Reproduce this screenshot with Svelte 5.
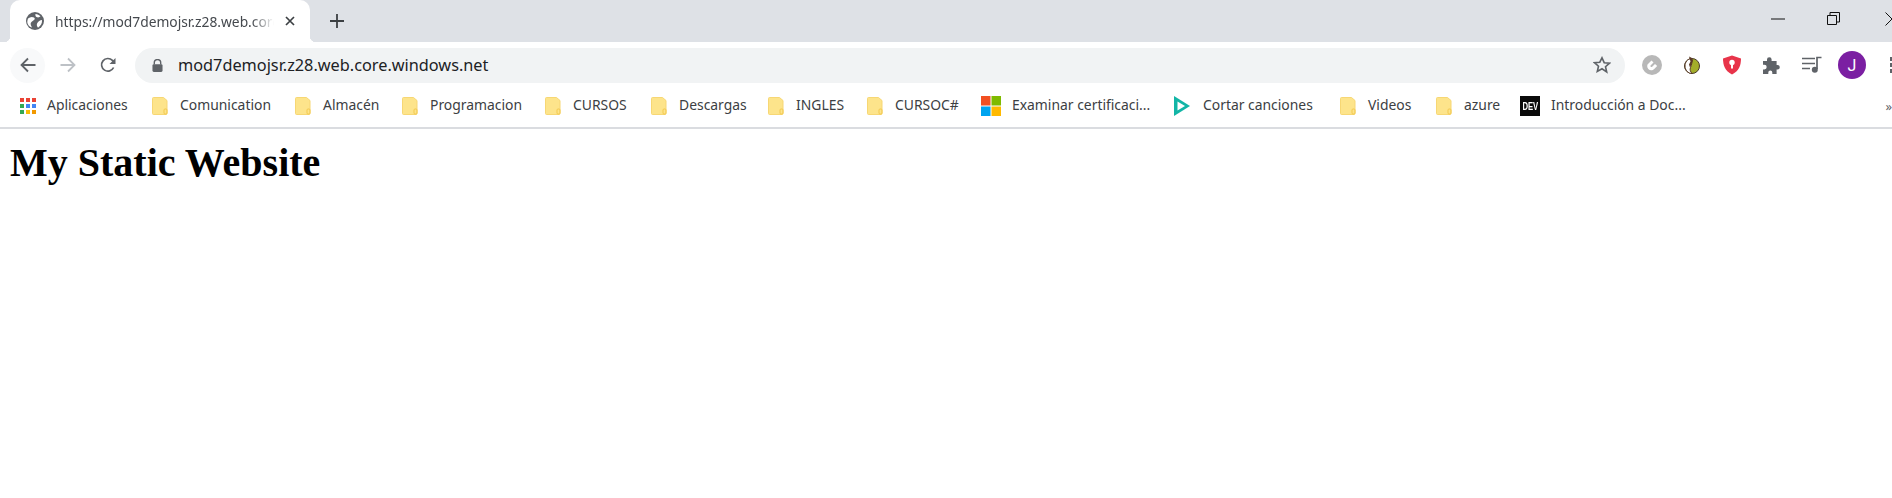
<script>
    const bookmarks = [
        { label: "Aplicaciones", icon: "apps", width: 132 },
        { label: "Comunication", icon: "folder", width: 143 },
        { label: "Almacén", icon: "folder", width: 107 },
        { label: "Programacion", icon: "folder", width: 143 },
        { label: "CURSOS", icon: "folder", width: 106 },
        { label: "Descargas", icon: "folder", width: 117 },
        { label: "INGLES", icon: "folder", width: 99 },
        { label: "CURSOC#", icon: "folder", width: 114 },
        { label: "Examinar certificaci...", icon: "ms", width: 192 },
        { label: "Cortar canciones", icon: "play", width: 167 },
        { label: "Videos", icon: "folder", width: 96 },
        { label: "azure", icon: "folder", width: 84 },
        { label: "Introducción a Doc...", icon: "dev", width: 190 },
    ];
</script>

<div class="browser">
    <div class="tabstrip">
        <div class="tab">
            <svg viewBox="0 0 18 18" width="18" height="18">
                <circle cx="9" cy="9" r="9" fill="#5f6368" />
                <path d="M2 6.500C4 5 6 4.500 8 5.500c1.500.9.5 2.500-1 3.300C5 10 4 11.500 5 13.500l1 2c-2-.5-3.500-1.500-4.200-3.500C1 10.500 1.300 8.500 2 6.500zM9.500 2c2 .2 3.700 1 5 2.300-1 1.200-2.700 1.500-4 .7-1-.6-1.300-1.900-1-3zM16 8c.3 3-1 5.800-4 7.700-1.200-1.400-1.500-3-.8-4.400.9-1.800 2.800-3.300 4.800-3.300z" fill="#fff" />
            </svg>
            <span class="tab-title">https://mod7demojsr.z28.web.core.windows.net</span>
            <svg viewBox="0 0 10 10" width="10" height="10">
                <path d="M1 1l8 8M9 1l-8 8" stroke="#3c4043" stroke-width="1.700" />
            </svg>
        </div>
        <svg class="new-tab" viewBox="0 0 14 14" width="14" height="14">
            <path d="M7 0v14M0 7h14" stroke="#3c4043" stroke-width="1.800" />
        </svg>
        <div class="window-controls">
            <svg class="win-min" viewBox="0 0 14 2" width="14" height="2">
                <path d="M0 1h14" stroke="#111" stroke-width="1" />
            </svg>
            <svg viewBox="0 0 13 13" width="13" height="13">
                <path d="M.5 3.500h9v9h-9zM3 3.500v-3h9.500v9.500h-3" fill="none" stroke="#111" stroke-width="1" />
            </svg>
            <svg class="win-close" viewBox="0 0 14 14" width="14" height="14">
                <path d="M.5.500l13 13M13.500.500l-13 13" stroke="#111" stroke-width="1" />
            </svg>
        </div>
    </div>

    <div class="toolbar">
        <div class="nav-button hovered">
            <svg viewBox="0 0 16 16" width="16" height="16">
                <path d="M15.500 8H2M8 1.500L1.500 8 8 14.500" fill="none" stroke="#5f6368" stroke-width="1.800" />
            </svg>
        </div>
        <div class="nav-button">
            <svg viewBox="0 0 16 16" width="16" height="16">
                <path d="M.5 8H14M8 1.500L14.500 8 8 14.500" fill="none" stroke="#bdc1c6" stroke-width="1.800" />
            </svg>
        </div>
        <div class="nav-button reload">
            <svg viewBox="0 0 16 16" width="16" height="16">
                <path d="M13.600 10.500A6.300 6.300 0 1 1 12.400 3.400L14.500 5.500" fill="none" stroke="#5f6368" stroke-width="1.700" />
                <path d="M15.500.9v6h-6z" fill="#5f6368" />
            </svg>
        </div>
        <div class="omnibox">
            <svg viewBox="0 0 12 14" width="11" height="13">
                <path d="M2.500 6V4a3.500 3.500 0 0 1 7 0v2" fill="none" stroke="#5f6368" stroke-width="1.500" />
                <rect x="0.500" y="5.500" width="11" height="8.500" rx="1.500" fill="#5f6368" />
            </svg>
            <span class="url">mod7demojsr.z28.web.core.windows.net</span>
            <svg viewBox="0 0 18 18" width="18" height="18">
                <path d="M9 1.800l2.200 4.900 5.300.5-4 3.500 1.200 5.300L9 12.800l-4.700 2.700 1.200-5.300-4-3.500 5.300-.5z" fill="none" stroke="#5f6368" stroke-width="1.600" />
            </svg>
        </div>
        <div class="extensions">
            <div class="ext">
                <svg viewBox="0 0 20 20" width="20" height="20">
                    <circle cx="10" cy="10" r="10" fill="#b8b8b8" />
                    <path d="M5.500 9.500l-.3 1.500a4 4 0 0 0 4 4.200c1.200 0 2.200-.5 3-1.300l3-3-2.200-2-2.800 2.800c-.8.800-2.200 0-1.700-1.200l3-3-2-2z" fill="#fff" />
                </svg>
            </div>
            <div class="ext">
                <svg viewBox="0 0 18 18" width="18" height="18">
                    <circle cx="9" cy="10" r="7.500" fill="#a3ad2a" stroke="#4a3a2a" stroke-width="1" />
                    <path d="M8.500 2.500C4.500 3 2 6 2 10s3 7.500 7 7.500c-1.500-2-2.500-3.500-1.500-6s2-5.500 1-9z" fill="#fff" stroke="#5a3a26" stroke-width="1" />
                    <path d="M6 .5l3 1.500 1 2.500-1.500 4-1.500 3-1-3 1.500-3z" fill="#5a3a26" />
                </svg>
            </div>
            <div class="ext">
                <svg viewBox="0 0 20 20" width="20" height="20">
                    <path d="M10 .5L19 3.500c0 7-2 12.500-9 16C3 16 1 10.500 1 3.500z" fill="#e8344a" />
                    <circle cx="10" cy="7.500" r="2.700" fill="#fff" />
                    <path d="M9 8.500h2v5H9z" fill="#fff" />
                </svg>
            </div>
            <div class="ext">
                <svg viewBox="0 0 18 18" width="18" height="18">
                    <path d="M0 5h4V3.500a2.300 2.300 0 0 1 4.600 0V5h5v4h.9a2.300 2.300 0 0 1 0 4.600H13.600V18H9.300v-1.500a2 2 0 0 0-4 0V18H0v-4.500h1.300a2.400 2.400 0 0 0 0-4.800H0z" fill="#5f6368" />
                </svg>
            </div>
            <div class="ext">
                <svg viewBox="0 0 20 18" width="20" height="18">
                    <path d="M0 2.500h13M0 7.500h13M0 12.500h8" stroke="#5f6368" stroke-width="1.700" />
                    <path d="M15 13V1.500h4.500" fill="none" stroke="#5f6368" stroke-width="1.700" />
                    <circle cx="12.800" cy="13.800" r="3" fill="#5f6368" />
                </svg>
            </div>
            <div class="ext">
                <div class="avatar">J</div>
            </div>
            <div class="ext">
                <svg viewBox="0 0 4 16" width="4" height="16">
                    <rect x="0" y="0" width="4" height="4" fill="#5f6368" />
                    <rect x="0" y="6" width="4" height="4" fill="#5f6368" />
                    <rect x="0" y="12" width="4" height="4" fill="#5f6368" />
                </svg>
            </div>
        </div>
    </div>

    <div class="bookmarks">
        {#each bookmarks as b}
            <div class="bookmark" style="width: {b.width}px">
                {#if b.icon === "folder"}
                    <svg class="folder" viewBox="0 0 16 18" width="16" height="18">
                        <path d="M1.500.500h10l3.500 3v13a1 1 0 0 1-1 1H1.500a1 1 0 0 1-1-1v-15a1 1 0 0 1 1-1z" fill="#fde48b" stroke="#f7d774" />
                        <rect x="12" y="12" width="3" height="5" rx="1" fill="none" stroke="#f3c94f" />
                    </svg>
                {:else if b.icon === "apps"}
                    <svg viewBox="0 0 16 16" width="16" height="16">
                        <rect x="0" y="0" width="4" height="4" fill="#ea4335" />
                        <rect x="6" y="0" width="4" height="4" fill="#ea4335" />
                        <rect x="12" y="0" width="4" height="4" fill="#ea4335" />
                        <rect x="0" y="6" width="4" height="4" fill="#34a853" />
                        <rect x="6" y="6" width="4" height="4" fill="#4285f4" />
                        <rect x="12" y="6" width="4" height="4" fill="#4285f4" />
                        <rect x="0" y="12" width="4" height="4" fill="#34a853" />
                        <rect x="6" y="12" width="4" height="4" fill="#fbbc04" />
                        <rect x="12" y="12" width="4" height="4" fill="#f29900" />
                    </svg>
                {:else if b.icon === "ms"}
                    <svg viewBox="0 0 20 20" width="20" height="20">
                        <rect x="0" y="0" width="9.500" height="9.500" fill="#f25022" />
                        <rect x="10.500" y="0" width="9.500" height="9.500" fill="#7fba00" />
                        <rect x="0" y="10.500" width="9.500" height="9.500" fill="#00a4ef" />
                        <rect x="10.500" y="10.500" width="9.500" height="9.500" fill="#ffb900" />
                    </svg>
                {:else if b.icon === "play"}
                    <svg class="folder" viewBox="0 0 18 20" width="18" height="20">
                        <path d="M1 0l16 10L1 20z" fill="#12b5a6" />
                        <path d="M4.500 5.500l7.500 4.500-7.500 4.500z" fill="#fff" />
                    </svg>
                {:else if b.icon === "dev"}
                    <div class="dev-icon"><span>DEV</span></div>
                {/if}
                <span class="bookmark-label">{b.label}</span>
            </div>
        {/each}
        <span class="more">»</span>
    </div>
</div>

<h1>My Static Website</h1>

<style>
    :global(body) {
        background: #ffffff;
        overflow: hidden;
    }

    .browser {
        font-family: "Noto Sans", "Open Sans", sans-serif;
        color: #3c4043;
    }

    .tabstrip {
        display: flex;
        align-items: flex-end;
        height: 42px;
        background: #dee1e6;
        padding-left: 10px;
    }

    .tab {
        display: flex;
        align-items: center;
        position: relative;
        width: 300px;
        height: 42px;
        padding: 0 15px 0 16px;
        box-sizing: border-box;
        background: #ffffff;
        border-radius: 10px 10px 0 0;
        gap: 11px;
    }

    /* flared foot of the active tab */
    .tab::before,
    .tab::after {
        content: "";
        position: absolute;
        bottom: 0;
        width: 6px;
        height: 6px;
    }

    .tab::before {
        left: -6px;
        background: radial-gradient(circle at 0 0, transparent 6px, #ffffff 6.500px);
    }

    .tab::after {
        right: -6px;
        background: radial-gradient(circle at 100% 0, transparent 6px, #ffffff 6.500px);
    }

    .tab-title {
        flex: 1;
        overflow: hidden;
        white-space: nowrap;
        font-size: 13.800px;
        color: #45494e;
        -webkit-mask-image: linear-gradient(to right, #000 90%, transparent);
        mask-image: linear-gradient(to right, #000 90%, transparent);
    }

    .new-tab {
        margin: 0 0 14px 20px;
    }

    .window-controls {
        display: flex;
        align-items: center;
        align-self: flex-start;
        gap: 45px;
        margin-left: auto;
        height: 37px;
    }

    .win-min {
        margin-right: -3px;
    }

    .win-close {
        margin-right: -7px;
    }

    .toolbar {
        display: flex;
        align-items: center;
        height: 46px;
        padding-left: 10px;
        background: #ffffff;
    }

    .nav-button {
        display: flex;
        flex-shrink: 0;
        align-items: center;
        justify-content: center;
        width: 35px;
        height: 35px;
        margin-right: 5px;
        border-radius: 50%;
    }

    .hovered {
        background: #f8f9fa;
    }

    .reload {
        margin-right: 10px;
    }

    .omnibox {
        display: flex;
        align-items: center;
        flex-shrink: 0;
        width: 1490px;
        height: 35px;
        padding: 0 14px 0 17px;
        box-sizing: border-box;
        background: #f1f3f4;
        border-radius: 18px;
    }

    .url {
        flex: 1;
        margin-left: 15px;
        font-size: 16.300px;
        color: #202124;
    }

    .extensions {
        display: flex;
        flex-shrink: 0;
        align-items: center;
        margin-left: 7px;
    }

    .ext {
        display: flex;
        flex-shrink: 0;
        align-items: center;
        justify-content: center;
        width: 40px;
    }

    .avatar {
        display: flex;
        align-items: center;
        justify-content: center;
        width: 28px;
        height: 28px;
        border-radius: 50%;
        background: #7b1fa2;
        color: #ffffff;
        font-family: "Roboto", sans-serif;
        font-size: 16px;
    }

    .bookmarks {
        display: flex;
        align-items: center;
        position: relative;
        height: 35px;
        padding: 0 0 4px 20px;
        border-bottom: 2px solid #dadce0;
        background: #ffffff;
    }

    .bookmark {
        display: flex;
        align-items: center;
        flex-shrink: 0;
        gap: 11px;
        white-space: nowrap;
    }

    .folder {
        margin-right: 1px;
    }

    .bookmark-label {
        margin-bottom: 2px;
        font-size: 13.900px;
        color: #3c4043;
    }

    .dev-icon {
        display: flex;
        align-items: center;
        justify-content: center;
        width: 20px;
        height: 20px;
        overflow: hidden;
        background: #0a0a0a;
        color: #ffffff;
        font-family: "Liberation Sans", sans-serif;
        font-size: 11px;
        font-weight: 700;
    }

    .dev-icon span {
        transform: scaleX(0.7);
    }

    .more {
        position: absolute;
        right: 0;
        font-size: 13px;
        color: #5f6368;
    }

    h1 {
        margin: 11px 0 0 10px;
        font-family: "Liberation Serif", serif;
        font-size: 40px;
        font-weight: 700;
        line-height: 46px;
        color: #000000;
    }
</style>
